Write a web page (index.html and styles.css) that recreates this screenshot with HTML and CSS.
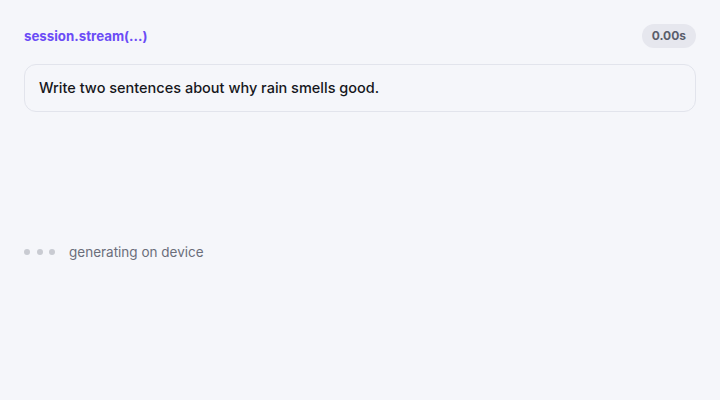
FILE: index.html
```html
<!DOCTYPE html>
<html>
<head>
<meta charset="utf-8">
<link rel="stylesheet" href="styles.css">
</head>
<body>
<main class="app">
  <header class="head">
    <span class="title">session.stream(...)</span>
    <span class="badge">0.00s</span>
  </header>
  <div class="prompt">Write two sentences about why rain smells good.</div>
  <div class="output"></div>
  <div class="status">
    <span class="dots"><i></i><i></i><i></i></span>
    <span class="label">generating on device</span>
  </div>
</main>
</body>
</html>
```
FILE: styles.css
```css
html, body {
  margin: 0;
  padding: 0;
  background: #f5f6fa;
  font-family: Inter, "Noto Sans", sans-serif;
}
.app {
  padding: 24px;
  display: flex;
  flex-direction: column;
  gap: 16px;
}
.head {
  display: flex;
  justify-content: space-between;
  align-items: center;
  height: 24px;
}
.title {
  color: #6b4cf6;
  font-weight: 700;
  font-size: 13.3px;
}
.badge {
  background: #e6e7ee;
  color: #5a5e6c;
  font-weight: 700;
  font-size: 12px;
  height: 24px;
  line-height: 24px;
  padding: 0 10px;
  border-radius: 12px;
}
.prompt {
  border: 1px solid #e2e4ec;
  border-radius: 12px;
  padding: 0 14px;
  height: 46px;
  line-height: 46px;
  font-size: 14.5px;
  font-weight: 500;
  color: #16171c;
}
.output {
  height: 100px;
}
.status {
  display: flex;
  align-items: center;
  gap: 14px;
  height: 16px;
}
.dots {
  display: flex;
  gap: 6.5px;
}
.dots i {
  width: 6px;
  height: 6px;
  border-radius: 50%;
  background: #c9cbd2;
}
.label {
  font-size: 13.5px;
  color: #6b6e7a;
}
```
